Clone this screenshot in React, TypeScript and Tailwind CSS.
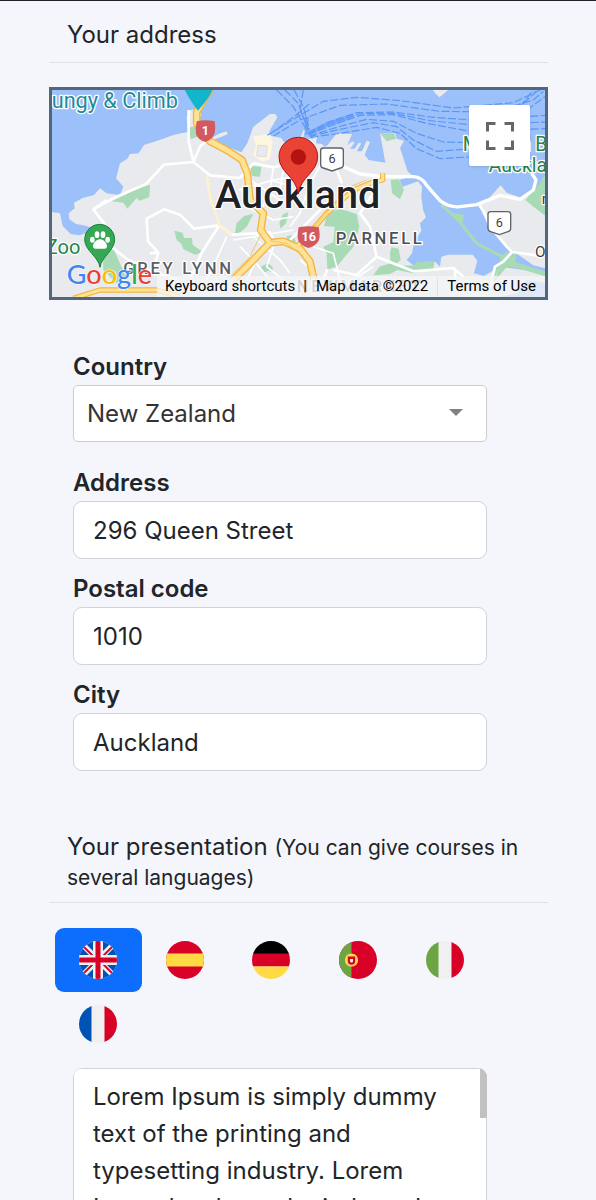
import { useState } from "react";
import type { ReactNode } from "react";

// --- DATA ---
const countries = ["New Zealand", "Australia", "France", "Germany", "Italy", "Portugal", "Spain", "United Kingdom"];

const fields = [
  { id: "address", label: "Address", value: "296 Queen Street" },
  { id: "postal-code", label: "Postal code", value: "1010" },
  { id: "city", label: "City", value: "Auckland" },
];

const lorem =
  "Lorem Ipsum is simply dummy text of the printing and typesetting industry. Lorem Ipsum has been the industry's standard dummy text ever since the 1500s, when an unknown printer took a galley of type and scrambled it to make a type specimen book.";

const languages: { code: string; name: string; art: ReactNode }[] = [
  {
    code: "en",
    name: "English",
    art: (
      <>
        <path fill="#f0f0f0" d="M0 0h38v38H0z" />
        <path fill="#0052b4" d="M6 2l8-2v10zM32 2l-8-2v10zM6 36l8 2V28zM32 36l-8 2V28zM2 6l-2 8h10zM36 6l2 8H28zM2 32l-2-8h10zM36 32l2-8H28z" />
        <path stroke="#d80027" strokeWidth="1.8" d="M4.5 5.5l9 9M33.5 5.5l-9 9M4.5 32.5l9-9M33.5 32.5l-9-9" />
        <path fill="#f0f0f0" d="M14 0h10v38H14zM0 14h38v10H0z" />
        <path fill="#d80027" d="M16.5 0h5v38h-5zM0 16.5h38v5H0z" />
      </>
    ),
  },
  {
    code: "es",
    name: "Spanish",
    art: (
      <>
        <path fill="#d80027" d="M0 0h38v38H0z" />
        <path fill="#ffda44" d="M0 12.5h38v13H0z" />
      </>
    ),
  },
  {
    code: "de",
    name: "German",
    art: (
      <>
        <path fill="#000" d="M0 0h38v13H0z" />
        <path fill="#d80027" d="M0 12.5h38v13H0z" />
        <path fill="#ffda44" d="M0 25.5h38V38H0z" />
      </>
    ),
  },
  {
    code: "pt",
    name: "Portuguese",
    art: (
      <>
        <path fill="#d80027" d="M0 0h38v38H0z" />
        <path fill="#6da544" d="M0 0h12.5v38H0z" />
        <circle cx="12.5" cy="19" r="6.6" fill="#ffda44" />
        <path fill="#d80027" d="M8.8 15.5h7.4v4.5a3.7 3.7 0 0 1-7.4 0z" />
        <path fill="#f0f0f0" d="M11 18h3v2a1.5 1.5 0 0 1-3 0z" />
      </>
    ),
  },
  {
    code: "it",
    name: "Italian",
    art: (
      <>
        <path fill="#f0f0f0" d="M0 0h38v38H0z" />
        <path fill="#6da544" d="M0 0h12.5v38H0z" />
        <path fill="#d80027" d="M25.5 0H38v38H25.5z" />
      </>
    ),
  },
  {
    code: "fr",
    name: "French",
    art: (
      <>
        <path fill="#f0f0f0" d="M0 0h38v38H0z" />
        <path fill="#0052b4" d="M0 0h12.5v38H0z" />
        <path fill="#d80027" d="M25.5 0H38v38H25.5z" />
      </>
    ),
  },
];

function MapArt() {
  return (
    <svg viewBox="36 30 1479 621" preserveAspectRatio="xMidYMid slice" className="block h-full w-full font-normal" role="img" aria-label="Map of Auckland">
      <path fill="#9cc0f9" d="M0 0h1560v700H0z" />

      {/* land */}
      <g fill="#e8eaed">
        <path d="M30 395L60 400L68 438L92 462L118 466L140 458L152 442L130 436L108 432L88 418L86 400L104 385L102 368L128 354L162 345L180 325L200 340L240 346L250 320L240 308L228 295L240 250L262 236L270 222L296 220L312 195L352 182L400 165L445 155L440 110L452 90L478 84L484 105L470 125L474 150L500 182L540 160L560 154L563 163L545 170L524 178L546 194L604 217L622 190L640 140L690 102L706 102L712 112L690 150L686 166L724 174L730 184L750 200L776 188L790 150L796 152L788 176L820 176L824 160L832 162L828 190L846 192L856 204L890 160L936 162L922 196L936 184L944 188L930 206L944 206L956 188L964 190L950 214L966 214L980 182L990 186L974 224L986 240L1036 248L1020 160L1066 160L1070 176L1092 182L1080 204L1092 240L1102 272L1118 288L1078 300L1088 320L1134 304L1146 320L1144 352L1150 392L1158 412L1140 430L1144 452L1122 488L1116 520L1100 540L1120 556L1186 545L1200 560L1204 530L1225 524L1298 524L1312 542L1302 580L1340 590L1346 651H30z" />
        <path d="M1318 376L1340 362L1382 316L1400 338L1440 352L1480 334L1520 300V566L1480 556L1420 514L1392 492L1356 444L1328 402z" />
        <path d="M1310 600L1380 560L1520 580V610L1460 600L1430 640L1380 651H1300z" />
        <path d="M1178 30h46l-16 14-10 8-8-8z" />
      </g>

      {/* parks */}
      <g fill="#a8dab5">
        <path d="M215 364L252 346L290 326L330 314L328 352L298 362L290 354L262 386L250 368z" />
        <path d="M403 452L428 458L432 474L456 474L458 494L488 516L466 524L430 508L424 492L410 480z" />
        <path d="M584 462L590 430L612 408L640 402L620 440L602 456z" />
        <path d="M446 142L472 138V170L452 178zM630 258L664 260L660 290L636 288zM718 430L728 404L745 396L738 430L722 446z" />
        <path d="M188 500L222 510L244 560L270 580L230 610L190 570zM662 560L684 550L698 560V576L684 572L672 578zM740 468l20 -2 8 20 -26 6z" />
        <path d="M862 400L900 386L950 402L958 440L940 500L890 560L862 568L860 520L850 500L880 486L884 440L852 438z" />
        <path d="M1052 300L1076 298L1092 330L1080 358L1056 340zM1020 160L1062 160L1068 176L1040 184z" />
        <path d="M1050 520L1054 502L1076 506L1082 540L1062 558L1124 556L1130 546L1184 542L1180 566L1120 580L1072 570L1050 582L1000 586L1018 560L1052 550z" />
        <path d="M1212 380L1240 400L1274 404L1266 430L1250 424z" />
        <path d="M1380 530L1400 516L1430 524L1424 550L1520 576V590L1440 566L1400 560L1360 610L1380 560zM1456 360L1490 320L1520 280V410L1480 380z" />
      </g>
      <path fill="none" stroke="#a8dab5" strokeWidth="9" d="M1204 374L1260 426L1310 490L1390 532L1430 552L1520 582M1380 552L1350 610" />
      <path fill="#fef7e0" d="M640 170L690 162L698 186L690 240L664 244L640 226L648 194z" />
      <path fill="#e8eaed" stroke="#dadce0" strokeWidth="3" d="M654 196l28 2-4 32-28-2z" />

      {/* ferry routes */}
      <g fill="none" stroke="#5b96f5" strokeWidth="3.5" strokeDasharray="24 7">
        <path d="M710 30L760 80L800 150M735 30L775 70L804 150M790 30L780 90L806 150M762 30L790 80L808 150" />
        <path d="M682 166L780 106L850 64L950 52L1080 62L1240 84L1420 68L1500 30M690 162L770 104L810 70" />
        <path d="M700 168L780 120L900 76L1040 72L1200 94L1360 96L1480 60L1510 34" />
        <path d="M804 160L860 128L950 98L1060 96L1180 112L1300 120L1520 106" />
        <path d="M805 162L865 132L955 102L1060 100L1170 122L1290 134L1520 126" />
        <path d="M806 164L870 138L960 106L1060 104L1160 130L1280 152L1520 146" />
        <path d="M808 168L890 142L980 118L1060 124L1130 160L1210 186L1300 188" />
        <path d="M810 170L890 150L1000 128L1070 140L1120 180L1190 214L1300 206" />
        <path d="M812 172L900 160L1010 142L1080 160L1130 206L1200 236L1300 230" />
        <path d="M1440 80L1480 30M1460 90L1515 50M1450 70L1490 34" />
      </g>
      <path fill="none" stroke="#5b96f5" strokeWidth="12" opacity=".6" d="M800 110V165M806 160L860 134L940 108" />

      {/* local streets */}
      <g fill="none" stroke="#fff" strokeLinejoin="round">
        <g strokeWidth="8">
          <path d="M446 90V185L460 246L510 286L600 294M460 246L480 200L500 180M460 246L372 254L318 312L230 350L160 388L200 440L214 500L262 538L350 580L420 600M160 388L200 360" />
          <path d="M330 520L355 518L324 484L320 416L372 388L420 404L462 446L538 436L576 464L690 458L700 480M355 518L344 555M538 436L484 520L450 600" />
          <path d="M600 294L640 250L700 262L800 240M856 200L890 262" />
          <path strokeWidth="10" d="M906 258L960 282L1030 290L1120 290Q1146 292 1160 316L1200 362Q1230 384 1260 380L1310 374L1380 346L1440 358L1480 330L1488 300L1475 280" />
          <path d="M1318 376L1332 396L1350 440L1400 500L1416 516L1490 526M1416 516L1390 545L1365 560L1350 620M856 256L890 270L906 310M750 480L800 430L860 370M1000 340L960 400L990 440L1010 530L1120 574L1240 564L1270 590M1010 530L950 585L880 570M862 568L850 600M1245 565V600" />
        </g>
        <g strokeWidth="5">
          <path d="M596 330L700 300L770 290M630 300L720 360M700 262L690 330L660 400M730 270L716 350M690 300L760 320M640 470L720 540L750 580M600 500L640 540L690 600M660 520L620 600M700 500L680 560L730 600M560 470L520 560L500 600M580 480L760 450M620 380L700 420L760 410" />
          <path d="M800 340L780 400L750 440M820 500L880 520L900 600M850 240L800 330M940 600L1000 560M780 540L830 580" />
        </g>
        <path stroke="#fdf2cc" strokeWidth="8" d="M500 286L512 360L540 438L576 464" />
      </g>

      {/* motorways */}
      <g fill="none" strokeLinejoin="round">
        <g stroke="#f4b442">
          <path strokeWidth="23" d="M512 24L470 96L470 130L510 184L560 210L606 240L622 280L630 360L670 400L662 450L690 488L640 540L580 600M690 488L730 484L780 506L810 545L822 600" />
          <path strokeWidth="16" d="M770 500L800 470L860 400L940 330L1000 306L1028 300V280M100 655L180 630L350 630L420 650" />
        </g>
        <g stroke="#fde293">
          <path strokeWidth="15" d="M512 24L470 96L470 130L510 184L560 210L606 240L622 280L630 360L670 400L662 450L690 488L640 540L580 600M690 488L730 484L780 506L810 545L822 600" />
          <path strokeWidth="9" d="M770 500L800 470L860 400L940 330L1000 306L1028 300V280M100 655L180 630L350 630L420 650" />
        </g>
        <path stroke="#f4b442" strokeWidth="2" d="M664 460L630 530L560 600M690 482L740 490L790 530M810 460L890 360M930 320L980 300" />
      </g>

      {/* route shields */}
      <g fontFamily="Roboto, sans-serif" fontWeight="700" textAnchor="middle">
        <path fill="#d3595f" d="M470 124q26-6 54 0q4 28-2 40q-6 14-26 22q-22-8-27-22q-4-12 1-40z" />
        <text x="496" y="164" fontSize="38" fill="#fff">1</text>
        <path fill="#d3595f" d="M776 442q30-6 60 0q6 28 0 40q-8 14-30 22q-24-8-31-22q-5-12 1-40z" />
        <text x="806" y="483" fontSize="38" fill="#fff">16</text>
        <g fill="#fff" stroke="#5f6368" strokeWidth="4">
          <path d="M850 204h52q8 0 8 8v42q0 8-8 10l-26 9-26-9q-8-2-8-10v-42q0-8 8-8z" />
          <path d="M1352 395h52q8 0 8 8v42q0 8-8 10l-26 9-26-9q-8-2-8-10v-42q0-8 8-8z" />
        </g>
        <text x="876" y="250" fontSize="38" fontWeight="400" fill="#3c4043">6</text>
        <text x="1378" y="441" fontSize="38" fontWeight="400" fill="#3c4043">6</text>
      </g>

      {/* place names */}
      <g fontFamily="Roboto, sans-serif" stroke="#fff" strokeWidth="8" strokeLinejoin="round" paintOrder="stroke">
        <path fill="#12b5cb" strokeWidth="0" d="M434 28h84q-8 24-44 64q-28-36-40-64z" />
        <text x="414" y="83" textAnchor="end" fontSize="65" fill="#1f8a96">Bungy &amp; Climb</text>
        <text x="121" y="522" textAnchor="end" fontSize="60" fill="#26834a">Zoo</text>
        <text x="250" y="581" fontSize="50" fontWeight="500" letterSpacing="8" fill="#5b5f64">GREY LYNN</text>
        <text x="887" y="492" fontSize="50" fontWeight="500" letterSpacing="8" fill="#4d5156">PARNELL</text>
        <text x="770" y="636" fontSize="50" fontWeight="500" letterSpacing="8" fill="#6b6f74">NEWMARKET</text>
        <text x="1268" y="214" fontSize="58" fill="#26834a">Mission Bay</text>
        <text x="1346" y="276" fontSize="58" fill="#26834a">Auckland</text>
        <text x="1485" y="532" fontSize="46" fill="#3c4043">Ora</text>
        <text x="1505" y="372" fontSize="46" fill="#3c4043">m</text>
        <text x="525" y="383" fontSize="119" fontWeight="500" fill="#202124">Auckland</text>
      </g>

      {/* zoo marker */}
      <path fill="#34a853" stroke="#188038" strokeWidth="3" d="M180 562C176 530 134 512 134 478a45 45 0 0 1 90 0C224 512 184 530 180 562z" />
      <g fill="#fff">
        <path d="M180 478c12 0 22 14 21 22-2 9-14 6-21 6s-19 3-21-6c-1-8 9-22 21-22z" />
        <ellipse cx="157" cy="479" rx="7" ry="9" />
        <ellipse cx="171" cy="464" rx="7" ry="10" />
        <ellipse cx="189" cy="464" rx="7" ry="10" />
        <ellipse cx="203" cy="479" rx="7" ry="9" />
      </g>

      {/* address pin */}
      <path fill="#ea4335" stroke="#b31412" strokeWidth="3" d="M775 342C768 288 717 278 717 230a58 58 0 0 1 116 0C833 278 782 288 775 342z" />
      <circle cx="775" cy="231" r="23" fill="#b31412" />

      {/* logo */}
      <text x="80" y="612" fontFamily="Lato, sans-serif" fontSize="81" fontWeight="500" stroke="#fff" strokeWidth="3" paintOrder="stroke">
        <tspan fill="#4285f4">G</tspan>
        <tspan fill="#ea4335">o</tspan>
        <tspan fill="#fbbc04">o</tspan>
        <tspan fill="#4285f4">g</tspan>
        <tspan fill="#34a853">l</tspan>
        <tspan fill="#ea4335">e</tspan>
      </text>
    </svg>
  );
}

function AddressMap() {
  return (
    <div className="relative mt-6 h-[213px] overflow-hidden border-3 border-[#53677a]">
      <MapArt />
      <button type="button" aria-label="Toggle fullscreen view" className="absolute top-[15px] right-[15px] flex h-[61px] w-[61px] items-center justify-center rounded-xs bg-white shadow">
        <svg viewBox="0 0 28 28" className="h-7 w-7" fill="none" stroke="#666" strokeWidth="3">
          <path d="M1.5 9.500v-8h8M18.5 1.5h8v8M26.5 18.5v8h-8M9.5 26.5h-8v-8" />
        </svg>
      </button>
      <div className="absolute right-0 bottom-0 flex h-[21px] items-center bg-[#f5f5f5]/75 pr-[9px] font-[Roboto,sans-serif] text-[15px] whitespace-nowrap text-black">
        <button type="button" className="px-2">Keyboard shortcuts</button>
        <span>|</span>
        <span className="px-[9px]">Map data ©2022</span>
        <a href="#terms" className="border-l border-[#dfe3e8] pl-[9px]">Terms of Use</a>
      </div>
    </div>
  );
}

export default function App() {
  const [country, setCountry] = useState(countries[0]);
  const [lang, setLang] = useState("en");

  return (
    <main className="h-screen overflow-y-auto border-t border-[#202028] bg-[#f4f6fb] pr-12 pl-[49px] font-[Inter,sans-serif] text-2xl font-normal text-[#212529] [scrollbar-width:none]">
      <section className="pt-[19px]">
        <h2 className="border-b border-[#dee2e6] px-[18px] pb-3 leading-[30px]">Your address</h2>

        <AddressMap />

        <form className="mt-[49px] mr-[61px] ml-6">
          <label htmlFor="country" className="block leading-9 font-semibold">Country</label>
          <div className="relative mb-[23px]">
            <select
              id="country"
              value={country}
              onChange={(e) => setCountry(e.target.value)}
              className="block h-[57px] w-full appearance-none rounded-[5px] border border-[#ccc] bg-white pl-[13px] text-[#333]"
            >
              {countries.map((name) => (
                <option key={name}>{name}</option>
              ))}
            </select>
            <svg viewBox="0 0 14 7" className="pointer-events-none absolute top-6 right-6 h-[7px] w-[14px]" fill="#808080">
              <path d="M0 0h14L7 7z" />
            </svg>
          </div>

          {fields.map((field) => (
            <div key={field.id} className="mb-3">
              <label htmlFor={field.id} className="block leading-9 font-semibold">{field.label}</label>
              <input id={field.id} type="text" defaultValue={field.value} className="block h-[58px] w-full rounded-[9px] border border-[#ced4da] bg-white px-[19px]" />
            </div>
          ))}
        </form>
      </section>

      <section className="pt-[49px]">
        <h2 className="border-b border-[#dee2e6] px-[18px] pb-[10px] leading-[30px]">
          Your presentation <small className="text-[21px] leading-none">(You can give courses in several languages)</small>
        </h2>

        <div className="mt-[25px] grid grid-cols-5 pr-[60px] pl-[6px]">
          {languages.map(({ code, name, art }) => (
            <button
              key={code}
              type="button"
              aria-label={name}
              aria-pressed={lang === code}
              onClick={() => setLang(code)}
              className={`flex h-16 items-center justify-center rounded-[9px] ${lang === code ? "bg-[#0d6efd]" : ""}`}
            >
              <svg viewBox="0 0 38 38" className="h-[38px] w-[38px] rounded-full">{art}</svg>
            </button>
          ))}
        </div>

        <div className="relative mt-3 mr-[61px] ml-6 overflow-hidden rounded-[9px]">
          <textarea
            aria-label="Presentation"
            defaultValue={lorem}
            className="block h-[300px] w-full resize-none rounded-[9px] border border-[#ced4da] bg-white px-[19px] py-[9px] leading-[37px] [scrollbar-width:none]"
          />
          <div className="absolute top-0 right-0 h-[50px] w-[7px] bg-[#c1c1c1]" />
        </div>
      </section>
    </main>
  );
}
